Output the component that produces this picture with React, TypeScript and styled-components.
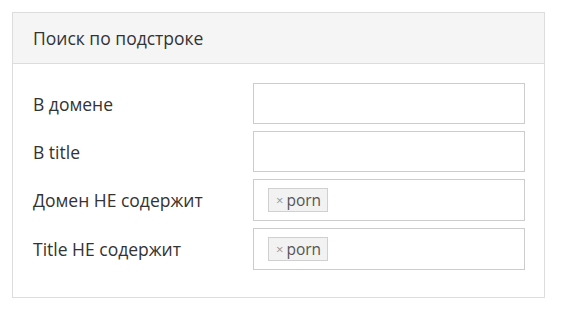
import React from 'react';
import styled, { createGlobalStyle } from 'styled-components';

const GlobalStyle = createGlobalStyle`
  body {
    margin: 0;
    background: #fff;
    font-family: "Open Sans", "Liberation Sans", sans-serif;
    color: #333;
  }
`;

const Page = styled.div`
  padding: 12px 16px 0 12px;
`;

const Panel = styled.div`
  border: 1px solid #ddd;
  background: #fff;
`;

const PanelHeading = styled.div`
  background: #f5f5f5;
  border-bottom: 1px solid #ddd;
  height: 50px;
  display: flex;
  align-items: center;
  padding: 0 20px;
  font-size: 17.5px;
  color: #333;
`;

const PanelBody = styled.div`
  padding: 19px 19px 27px 20px;
  display: flex;
  flex-direction: column;
  gap: 7px;
`;

const Row = styled.div`
  display: grid;
  grid-template-columns: 220px 1fr;
  align-items: center;
`;

const Label = styled.label`
  font-size: 17.5px;
  color: #333;
`;

const Field = styled.div<{ $tags?: boolean }>`
  box-sizing: border-box;
  height: ${(p) => (p.$tags ? 42 : 41)}px;
  border: 1px solid #ccc;
  background: #fff;
  display: flex;
  align-items: center;
  padding: 0 14px;
`;

const Tag = styled.span`
  display: inline-flex;
  align-items: center;
  height: 24px;
  box-sizing: border-box;
  padding: 0 6px 0 7px;
  background: #f2f2f2;
  border: 1px solid #d0d0d0;
  font-size: 15.5px;
  color: #555;
`;

const Remove = styled.span`
  color: #999;
  font-size: 13px;
  margin-right: 3px;
`;

const rows = [
  { label: 'В домене', tags: [] as string[] },
  { label: 'В title', tags: [] as string[] },
  { label: 'Домен НЕ содержит', tags: ['porn'] },
  { label: 'Title НЕ содержит', tags: ['porn'] },
];

const App = () => (
  <>
    <GlobalStyle />
    <Page>
      <Panel>
        <PanelHeading>Поиск по подстроке</PanelHeading>
        <PanelBody>
          {rows.map((row) => (
            <Row key={row.label}>
              <Label>{row.label}</Label>
              <Field $tags={row.tags.length > 0}>
                {row.tags.map((tag) => (
                  <Tag key={tag}>
                    <Remove>×</Remove>
                    {tag}
                  </Tag>
                ))}
              </Field>
            </Row>
          ))}
        </PanelBody>
      </Panel>
    </Page>
  </>
);

export default App;
